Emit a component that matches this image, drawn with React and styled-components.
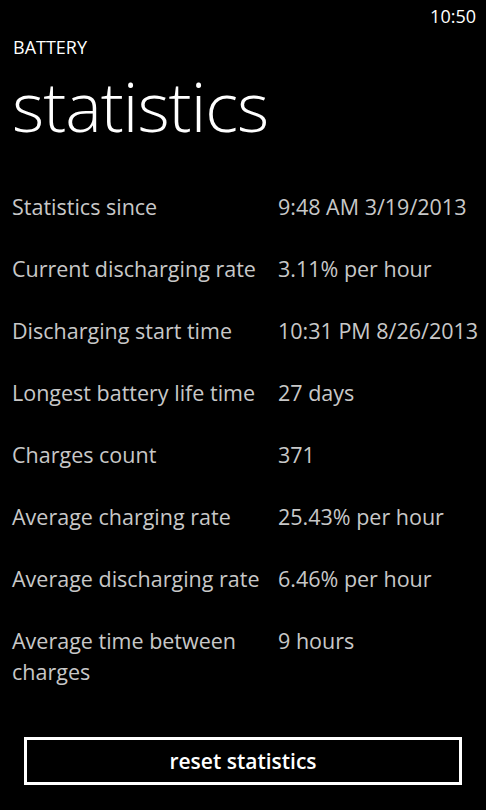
import styled, { createGlobalStyle } from "styled-components";

const GlobalStyle = createGlobalStyle`
  html, body {
    margin: 0;
    padding: 0;
    background: #000;
  }
  body {
    font-family: "Open Sans", "Noto Sans", sans-serif;
  }
`;

const stats = [
  { label: "Statistics since", value: "9:48 AM 3/19/2013" },
  { label: "Current discharging rate", value: "3.11% per hour" },
  { label: "Discharging start time", value: "10:31 PM 8/26/2013" },
  { label: "Longest battery life time", value: "27 days" },
  { label: "Charges count", value: "371" },
  { label: "Average charging rate", value: "25.43% per hour" },
  { label: "Average discharging rate", value: "6.46% per hour" },
  { label: "Average time between charges", value: "9 hours" },
];

export default function App() {
  return (
    <>
      <GlobalStyle />
      <Screen>
        <StatusBar>
          <Clock>10:50</Clock>
        </StatusBar>
        <Header>
          <AppName>BATTERY</AppName>
          <PageTitle>statistics</PageTitle>
        </Header>
        <StatsList>
          {stats.map((s) => (
            <StatRow key={s.label}>
              <Label>{s.label}</Label>
              <Value>{s.value}</Value>
            </StatRow>
          ))}
        </StatsList>
        <ResetButton>reset statistics</ResetButton>
      </Screen>
    </>
  );
}

const Screen = styled.div`
  width: 486px;
  height: 810px;
  background: #000;
  color: #fff;
  display: flex;
  flex-direction: column;
  overflow: hidden;
`;

const StatusBar = styled.div`
  height: 32px;
  display: flex;
  justify-content: flex-end;
  align-items: center;
  padding: 0 10px;
`;

const Clock = styled.span`
  font-size: 18px;
  color: #fff;
`;

const Header = styled.div`
  padding: 0 12px;
`;

const AppName = styled.div`
  font-size: 18px;
  line-height: 30px;
  padding-left: 1px;
  color: #fff;
`;

const PageTitle = styled.h1`
  margin: 0;
  font-weight: 300;
  font-size: 69px;
  line-height: 86px;
  letter-spacing: -1px;
  color: #fff;
`;

const StatsList = styled.div`
  padding: 43px 0 0 12px;
  display: flex;
  flex-direction: column;
  gap: 31px;
`;

const StatRow = styled.div`
  display: grid;
  grid-template-columns: 266px 1fr;
  font-size: 21.5px;
  line-height: 31px;
  color: #c8c8c8;
`;

const Label = styled.div``;

const Value = styled.div`
  white-space: nowrap;
`;

const ResetButton = styled.button`
  margin: auto 24px 25px;
  height: 48px;
  background: #000;
  border: 3px solid #fff;
  color: #fff;
  font-family: "Open Sans", "Noto Sans", sans-serif;
  font-weight: 600;
  font-size: 21px;
  padding: 0;
`;
